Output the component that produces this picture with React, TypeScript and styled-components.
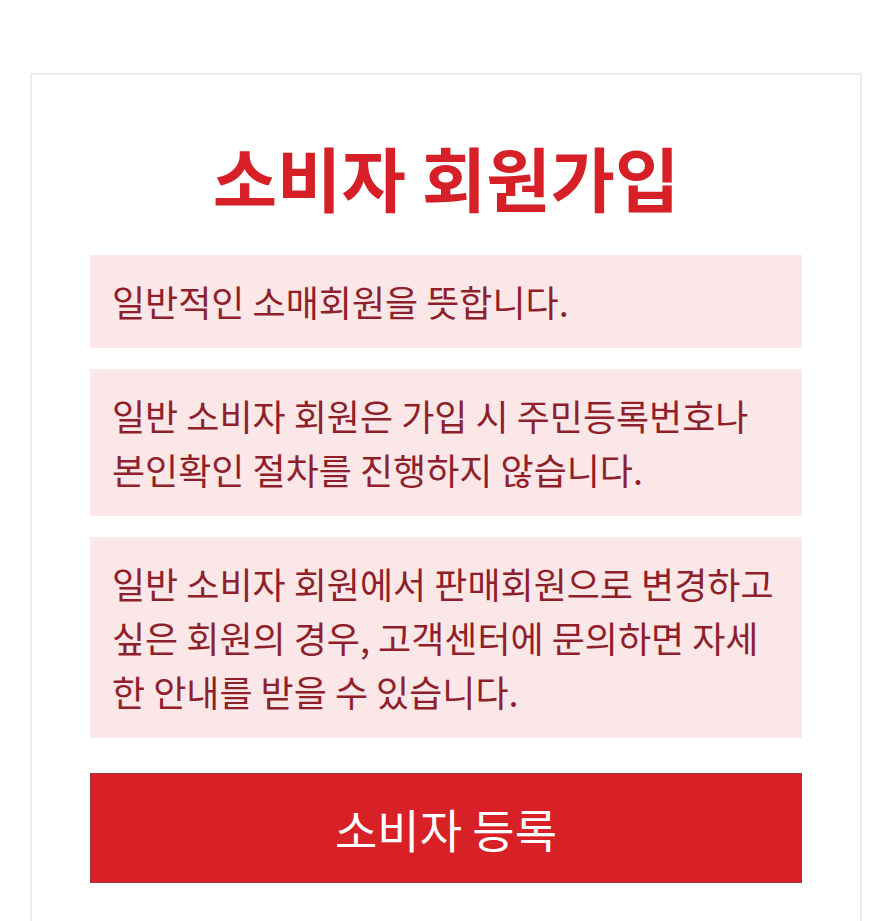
import React from "react";
import styled, { createGlobalStyle } from "styled-components";

const Global = createGlobalStyle`
  html, body { margin: 0; padding: 0; background: #ffffff; }
  body { font-family: "Noto Sans CJK KR", "Noto Sans", sans-serif; }
`;

const Page = styled.div`
  padding: 73px 24px 0 30px;
  height: 921px;
  box-sizing: border-box;
  overflow: hidden;
`;

const Card = styled.section`
  border: 2px solid #ececec;
  border-bottom: none;
  background: #fff;
  padding: 60px 58px 60px 58px;
  display: flex;
  flex-direction: column;
  min-height: 900px;
  box-sizing: border-box;
`;

const Title = styled.h1`
  margin: 0 0 36px 0;
  text-align: center;
  color: #d61f26;
  font-size: 70px;
  font-weight: 700;
  line-height: 84px;
  letter-spacing: 0;
`;

const Notes = styled.div`
  display: flex;
  flex-direction: column;
  gap: 21px;
`;

const Note = styled.p`
  margin: 0;
  background: #fbe7e8;
  color: #8f1f2a;
  font-size: 36px;
  line-height: 54px;
  padding: 19px 22px 20px;
  white-space: nowrap;
`;

const Submit = styled.button`
  margin-top: 35px;
  height: 110px;
  width: 100%;
  background: #d82027;
  border: 1px solid #a8363b;
  color: #fff;
  font-family: "Noto Sans CJK KR", "Noto Sans", sans-serif;
  font-size: 46px;
  font-weight: 400;
  cursor: pointer;
`;

export default function App() {
  return (
    <>
      <Global />
      <Page>
        <Card>
          <Title>소비자 회원가입</Title>
          <Notes>
            <Note>일반적인 소매회원을 뜻합니다.</Note>
            <Note>
              일반 소비자 회원은 가입 시 주민등록번호나
              <br />
              본인확인 절차를 진행하지 않습니다.
            </Note>
            <Note>
              일반 소비자 회원에서 판매회원으로 변경하고
              <br />
              싶은 회원의 경우, 고객센터에 문의하면 자세
              <br />한 안내를 받을 수 있습니다.
            </Note>
          </Notes>
          <Submit type="button">소비자 등록</Submit>
        </Card>
      </Page>
    </>
  );
}
